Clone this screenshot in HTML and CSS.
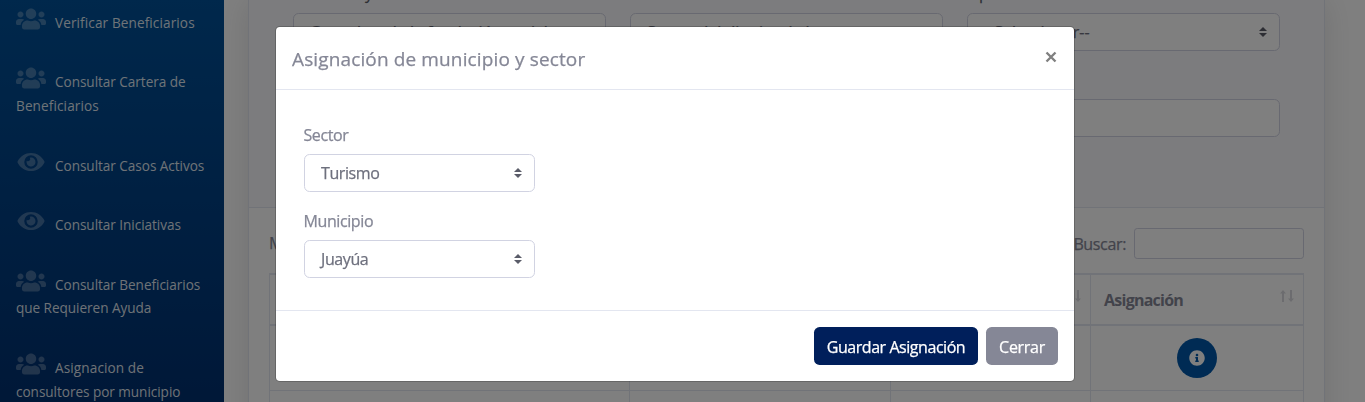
FILE: index.html
```html
<!DOCTYPE html>
<html lang="es">
<head>
<meta charset="utf-8">
<title>Asignación de municipio y sector</title>
<link rel="stylesheet" href="styles.css">
</head>
<body>
<svg width="0" height="0" class="sprite" aria-hidden="true">
  <symbol id="users" viewBox="0 0 640 512"><path d="M96 224c35.3 0 64-28.7 64-64s-28.7-64-64-64-64 28.7-64 64 28.7 64 64 64zm448 0c35.3 0 64-28.7 64-64s-28.7-64-64-64-64 28.7-64 64 28.7 64 64 64zm32 32h-64c-17.6 0-33.5 7.1-45.1 18.6 40.3 22.1 68.9 62 75.1 109.4h66c17.7 0 32-14.3 32-32v-32c0-35.3-28.7-64-64-64zm-256 0c61.9 0 112-50.1 112-112S381.9 32 320 32 208 82.1 208 144s50.1 112 112 112zm76.8 32h-8.3c-20.8 10-43.9 16-68.5 16s-47.6-6-68.5-16h-8.3C179.6 288 128 339.6 128 403.2V432c0 26.5 21.5 48 48 48h288c26.5 0 48-21.5 48-48v-28.8c0-63.6-51.6-115.2-115.2-115.2zm-223.7-13.4C161.5 263.1 145.6 256 128 256H64c-35.3 0-64 28.7-64 64v32c0 17.7 14.3 32 32 32h65.9c6.3-47.4 34.9-87.3 75.2-109.4z"/></symbol>
  <symbol id="eye" viewBox="0 0 576 512"><path d="M572.52 241.4C518.29 135.59 410.93 64 288 64S57.68 135.64 3.48 241.41a32.35 32.35 0 0 0 0 29.19C57.71 376.41 165.07 448 288 448s230.32-71.64 284.52-177.41a32.35 32.35 0 0 0 0-29.19zM288 400a144 144 0 1 1 144-144 143.93 143.93 0 0 1-144 144zm0-240a95.31 95.31 0 0 0-25.31 3.79 47.85 47.85 0 0 1-66.9 66.9A95.78 95.78 0 1 0 288 160z"/></symbol>
  <symbol id="caret" viewBox="0 0 4 5"><path d="M2 0L0 2h4zm0 5L0 3h4z"/></symbol>
  <symbol id="sort" viewBox="0 0 14 12"><path d="M3 0l3 3.500H4V12H2V3.500H0zM11 12l3-3.500h-2V0h-2v8.500H8z"/></symbol>
  <symbol id="info" viewBox="0 0 512 512"><path d="M256 8C119.043 8 8 119.083 8 256c0 136.997 111.043 248 248 248s248-111.003 248-248C504 119.083 392.957 8 256 8zm0 110c23.196 0 42 18.804 42 42s-18.804 42-42 42-42-18.804-42-42 18.804-42 42-42zm56 254c0 6.627-5.373 12-12 12h-88c-6.627 0-12-5.373-12-12v-24c0-6.627 5.373-12 12-12h12v-64h-12c-6.627 0-12-5.373-12-12v-24c0-6.627 5.373-12 12-12h64c6.627 0 12 5.373 12 12v100h12c6.627 0 12 5.373 12 12v24z"/></symbol>
</svg>

<div class="page">
  <nav class="sidebar">
    <a class="item"><span class="first"><svg><use href="#users"/></svg><span>Verificar Beneficiarios</span></span></a>
    <a class="item"><span class="first"><svg><use href="#users"/></svg><span class="tight">Consultar Cartera de</span></span><span class="second">Beneficiarios</span></a>
    <a class="item"><span class="first"><svg><use href="#eye"/></svg><span class="tight">Consultar Casos Activos</span></span></a>
    <a class="item"><span class="first"><svg><use href="#eye"/></svg><span class="tight">Consultar Iniciativas</span></span></a>
    <a class="item"><span class="first"><svg><use href="#users"/></svg><span class="tight">Consultar Beneficiarios</span></span><span class="second tight">que Requieren Ayuda</span></a>
    <a class="item"><span class="first"><svg><use href="#users"/></svg><span>Asignacion de</span></span><span class="second tight">consultores por municipio</span></a>
  </nav>

  <main class="main">
    <section class="card">
      <div class="filters">
        <div class="field"><label>Actividad &nbsp;y</label><div class="control">Consultor de la fundación social<svg class="caret"><use href="#caret"/></svg></div></div>
        <div class="field"><label>Sector</label><div class="control">Sector del distrito de la zona<svg class="caret"><use href="#caret"/></svg></div></div>
        <div class="field"><label>Tipo</label><div class="control">--Seleccionar--<svg class="caret"><use href="#caret"/></svg></div></div>
        <div class="field wide"><div class="control"></div></div>
      </div>
      <div class="results">
        <div class="tools"><span>Mostrar</span><label class="search"><span class="search-text">Buscar:</span><span class="search-box"></span></label></div>
        <table class="table">
          <colgroup><col class="c1"><col class="c2"><col class="c3"><col class="c4"></colgroup>
          <thead><tr><th></th><th></th><th><div class="head"><span></span><svg><use href="#sort"/></svg></div></th><th><div class="head"><span>Asignación</span><svg><use href="#sort"/></svg></div></th></tr></thead>
          <tbody>
            <tr><td></td><td></td><td></td><td><span class="info"><svg><use href="#info"/></svg></span></td></tr>
            <tr><td></td><td></td><td></td><td></td></tr>
          </tbody>
        </table>
      </div>
    </section>
  </main>
</div>

<div class="backdrop">
  <div class="modal">
    <header class="modal-head"><h5>Asignación de municipio y sector</h5><svg class="close" viewBox="0 0 12 12"><path d="M1.500 1.500l9 9M10.500 1.500l-9 9"/></svg></header>
    <div class="modal-body">
      <label>Sector</label>
      <div class="control">Turismo<svg class="caret"><use href="#caret"/></svg></div>
      <label>Municipio</label>
      <div class="control">Juayúa<svg class="caret"><use href="#caret"/></svg></div>
    </div>
    <footer class="modal-foot"><button class="btn save">Guardar Asignación</button><button class="btn shut">Cerrar</button></footer>
  </div>
</div>
</body>
</html>
```
FILE: styles.css
```css
* { box-sizing: border-box; }
body {
  margin: 0;
  height: 402px;
  overflow: hidden;
  background: #fff;
  color: #858796;
  font: 16px/24px "Trebuchet MS", "Open Sans", sans-serif;
  letter-spacing: -0.4px;
  -webkit-text-stroke: 0.25px;
}
.sprite { position: absolute; }
.page { display: flex; height: 402px; overflow: hidden; }

.sidebar {
  width: 224px;
  flex: none;
  position: relative;
  z-index: 1;
  background: linear-gradient(180deg, #005098, #003070);
  color: #fff;
  font-size: 13.6px;
  letter-spacing: 0.1px;
  -webkit-text-stroke: 0;
}
.item { display: block; padding: 6px 16px 26.100px; white-space: nowrap; }
.first { display: flex; height: 27.3px; }
.first svg { width: 30px; height: 24px; margin: 1px 9px 0 0; fill: #fff; opacity: .27; }
.first span { padding-top: 5px; color: rgba(255, 255, 255, .88); }
.second { display: block; margin-top: 1.600px; margin-bottom: -1.600px; color: rgba(255, 255, 255, .88); }
.first .tight, .second.tight { letter-spacing: -0.05px; }

.main { flex: 1; padding: 0 40px 0 24px; }
.card { width: 1077px; height: 460px; border: solid #e3e6f0; border-width: 0 1px; background: #fff; box-shadow: 0 2.4px 28px rgba(58, 59, 69, .15); }
.filters {
  height: 208px;
  padding: 0 44px;
  display: grid;
  grid-template-columns: repeat(3, 313px);
  grid-template-rows: 51px 86px;
  column-gap: 24px;
  background: #f8f9fc;
  border-bottom: 1px solid #e3e6f0;
}
.field { display: flex; flex-direction: column; justify-content: flex-end; color: #5a5c69; }
.field.wide { grid-column: 1 / -1; }
.field label { flex: none; margin-bottom: 8px; }
.control {
  height: 38px;
  flex: none;
  padding: 0 12px 0 16px;
  display: flex;
  align-items: center;
  justify-content: space-between;
  border: 1px solid #d1d3e2;
  border-radius: 5.600px;
  background: #fff;
  color: #6e707e;
}
.field .control { letter-spacing: 0; }
.caret { width: 8px; height: 10px; margin-left: auto; fill: #5a5c69; }

.results { padding: 20px; color: #858796; }
.tools { display: flex; justify-content: space-between; height: 45px; }
.tools > span { padding-top: 3px; }
.search { display: flex; gap: 8px; }
.search-text { padding-top: 4px; letter-spacing: -0.35px; }
.search-box { width: 170px; height: 31px; border: 1px solid #d1d3e2; border-radius: 3.200px; }
.table { width: 1034.500px; table-layout: fixed; border-collapse: collapse; }
.c1 { width: 360px; } .c2 { width: 261px; } .c3 { width: 200px; } .c4 { width: 213px; }
th, td { border: 1px solid #e3e6f0; padding: 0 9px 0 13px; }
th { height: 51px; border-top-width: 2px; border-bottom-width: 2px; text-align: left; letter-spacing: -0.75px; -webkit-text-stroke: 0; }
td { height: 65px; padding: 0; text-align: center; }
.head { display: flex; justify-content: space-between; align-items: center; }
.head svg { width: 14px; height: 12px; margin-top: -8px; fill: #d8d9de; }
.info { display: inline-flex; width: 40px; height: 40px; border-radius: 50%; background: #0057a8; align-items: center; justify-content: center; vertical-align: middle; }
.info svg { width: 16px; height: 16px; fill: #fff; }

.backdrop { position: fixed; inset: 0; z-index: 5; padding: 26px 15px 0 0; background: rgba(0, 0, 0, .5); }
.modal { width: 800px; height: 356px; margin: 0 auto; display: flex; flex-direction: column; border: 1px solid rgba(0, 0, 0, .2); border-radius: 4.800px; background: #fff; background-clip: padding-box; }
.modal-head { height: 63px; flex: none; display: flex; justify-content: space-between; align-items: flex-start; padding: 16px; border-bottom: 1px solid #e3e6f0; }
.modal-head h5 { margin: 2px 0 0; font-size: 19px; line-height: 28px; font-weight: 400; letter-spacing: 0.13px; }
.close { width: 12px; height: 12px; margin: 8px 1px 0 0; stroke: #808080; stroke-width: 2.400; fill: none; }
.modal-body { flex: 1; padding: 32px 27px 0 28px; }
.modal-body label { display: block; padding-top: 1px; margin: 0 0 7px -0.500px; }
.modal-body .control { width: 231px; margin-bottom: 16px; }
.modal-foot { height: 71px; flex: none; display: flex; justify-content: flex-end; gap: 8px; padding: 16px; border-top: 1px solid #e3e6f0; }
.btn { height: 38px; padding: 1px 0 0; border: 0; border-radius: 5.600px; color: #fff; font: inherit; letter-spacing: -0.45px; }
.save { width: 164px; background: #001f5b; }
.shut { width: 72px; background: #858796; letter-spacing: -0.3px; }
```
